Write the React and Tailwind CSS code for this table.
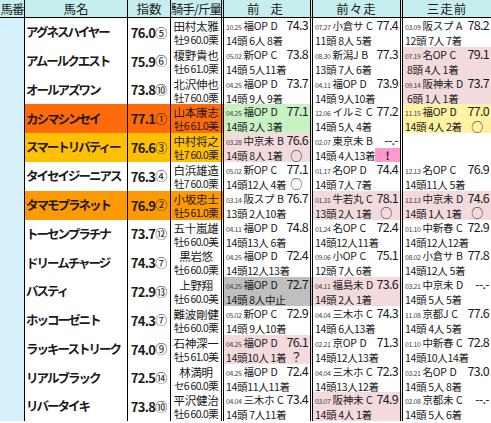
const BG = {
  pink: "bg-[#f3dadd]",
  green: "bg-[#c9f2c4]",
  gray: "bg-[#bfbfbf]",
  yellow: "bg-[#fff3a3]",
  none: "bg-white",
};

const HL = {
  red: "bg-[#ff6a0a]",
  gold: "bg-[#ffc000]",
  orange: "bg-[#ff9900]",
  none: "bg-white",
};

const rows = [
  { name: "アグネスハイヤー", idx: "76.0", no: "⑤", j: "田村太雅", info: "牡9 60.0栗",
    races: [
      { d: "10.25", c: "福OP D", v: "74.3", r: "14頭 6人 8着" },
      { d: "07.27", c: "小倉サ C", v: "77.4", r: "11頭 8人 5着" },
      { d: "03.09", c: "阪スプ A", v: "78.2", r: "12頭 7人 7着" },
    ] },
  { name: "アムールクエスト", idx: "75.9", no: "⑥", j: "榎野貴也", info: "牡6 61.0栗",
    races: [
      { d: "05.02", c: "新OP C", v: "73.8", r: "14頭 5人11着" },
      { d: "08.30", c: "新潟J B", v: "77.3", r: "13頭 7人 6着" },
      { d: "07.19", c: "名OP C", v: "79.1", r: " 8頭 4人 1着", bg: "pink" },
    ] },
  { name: "オールアズワン", idx: "73.8", no: "⑩", j: "北沢伸也", info: "牡7 60.0栗",
    races: [
      { d: "04.25", c: "福OP D", v: "73.7", r: "14頭 9人 9着" },
      { d: "04.11", c: "福OP D", v: "73.9", r: "14頭 9人10着" },
      { d: "09.14", c: "阪神未 D", v: "73.7", r: " 6頭 1人 1着", bg: "pink" },
    ] },
  { name: "カシマシンセイ", idx: "77.1", no: "①", j: "山本康志", info: "牡6 61.0美", hl: "red",
    races: [
      { d: "04.25", c: "福OP D", v: "77.1", r: "14頭 2人 3着", bg: "green" },
      { d: "12.06", c: "イルミ C", v: "77.2", r: "14頭 5人 4着" },
      { d: "11.15", c: "福OP D", v: "77.0", r: "14頭 4人 2着", bg: "yellow", m: "○" },
    ] },
  { name: "スマートリバティー", idx: "76.6", no: "③", j: "中村将之", info: "牡7 60.0栗", hl: "gold",
    races: [
      { d: "03.28", c: "中京未 B", v: "76.6", r: "14頭 8人 1着", bg: "pink", m: "○" },
      { d: "02.07", c: "東京未 B", v: "--.-", r: "14頭 4人13着", box: true },
      null,
    ] },
  { name: "タイセイジーニアス", idx: "76.3", no: "④", j: "白浜雄造", info: "牡7 60.0栗",
    races: [
      { d: "05.02", c: "新OP C", v: "77.1", r: "14頭12人 4着", m: "○" },
      { d: "01.17", c: "名OP D", v: "74.4", r: "14頭 7人 7着" },
      { d: "12.13", c: "名OP C", v: "76.9", r: "14頭11人 5着" },
    ] },
  { name: "タマモプラネット", idx: "76.9", no: "②", j: "小坂忠士", info: "牡5 61.0栗", hl: "orange",
    races: [
      { d: "03.14", c: "阪スプ B", v: "76.7", r: "13頭 2人10着" },
      { d: "01.31", c: "牛若丸 C", v: "78.1", r: "13頭 2人 1着", bg: "pink", m: "○" },
      { d: "12.13", c: "中京未 D", v: "74.6", r: "14頭 1人 1着", bg: "pink", m: "○" },
    ] },
  { name: "トーセンプラチナ", idx: "73.7", no: "⑫", j: "五十嵐雄", info: "牡6 60.0美",
    races: [
      { d: "04.11", c: "福OP D", v: "74.8", r: "14頭13人 6着" },
      { d: "01.24", c: "名OP C", v: "72.4", r: "14頭12人11着" },
      { d: "01.10", c: "中新春 C", v: "72.9", r: "14頭12人12着" },
    ] },
  { name: "ドリームチャージ", idx: "74.3", no: "⑦", j: "黒岩悠", info: "牡6 60.0栗",
    races: [
      { d: "04.25", c: "福OP D", v: "72.4", r: "14頭12人13着" },
      { d: "09.06", c: "小OP C", v: "75.1", r: "12頭 7人 6着" },
      { d: "08.02", c: "小倉サ B", v: "77.8", r: "14頭12人 5着" },
    ] },
  { name: "バスティ", idx: "72.9", no: "⑬", j: "上野翔", info: "牡6 60.0美",
    races: [
      { d: "04.25", c: "福OP D", v: "72.7", r: "14頭 8人中止", bg: "gray" },
      { d: "04.11", c: "福島未 D", v: "73.6", r: "14頭 2人 1着", bg: "pink" },
      { d: "03.21", c: "中京未 D", v: "--.-", r: "14頭 5人 5着" },
    ] },
  { name: "ホッコーゼニト", idx: "74.3", no: "⑦", j: "難波剛健", info: "牡6 60.0栗",
    races: [
      { d: "05.02", c: "新OP C", v: "72.9", r: "14頭 9人10着" },
      { d: "04.04", c: "三木ホ C", v: "74.3", r: "14頭 6人13着" },
      { d: "11.08", c: "京都J C", v: "77.6", r: "14頭 4人 5着" },
    ] },
  { name: "ラッキーストリーク", idx: "74.0", no: "⑨", j: "石神深一", info: "牡5 61.0美",
    races: [
      { d: "04.25", c: "福OP D", v: "76.1", r: "14頭10人 1着", bg: "pink", m: "？" },
      { d: "02.21", c: "京OP D", v: "71.3", r: "14頭12人13着" },
      { d: "01.10", c: "中新春 C", v: "72.8", r: "14頭10人14着" },
    ] },
  { name: "リアルブラック", idx: "72.5", no: "⑭", j: "林満明", info: "セ6 60.0栗",
    races: [
      { d: "04.25", c: "福OP D", v: "72.4", r: "14頭11人11着" },
      { d: "04.04", c: "三木ホ C", v: "72.3", r: "14頭13人12着" },
      { d: "03.21", c: "名OP D", v: "73.0", r: "14頭 5人 8着" },
    ] },
  { name: "リバータイキ", idx: "73.8", no: "⑩", j: "平沢健治", info: "牡6 60.0栗",
    races: [
      { d: "04.04", c: "三木ホ C", v: "73.4", r: "14頭 7人11着" },
      { d: "03.07", c: "阪神未 C", v: "74.9", r: "14頭 4人 1着", bg: "pink" },
      { d: "02.08", c: "京都未 C", v: "--.-", r: "14頭 5人 6着" },
    ] },
];

const cols = "grid grid-cols-[25px_103px_43px_53px_89px_90px_88px]";

function Race({ r, last }) {
  const edge = last ? "" : "border-r-[3px] border-double border-black";
  if (!r) return <div className={`bg-white ${edge}`} />;
  const [place, grade] = r.c.split(" ");
  return (
    <div className={`relative flex flex-col justify-center pl-[2px] pr-[2px] ${BG[r.bg || "none"]} ${edge}`}>
      <div className="flex items-baseline whitespace-pre leading-[14px]">
        <span className="text-[7px] tracking-[-0.4px] text-[#444]">{r.d}</span>
        <span className="ml-[2px] text-[10.5px] tracking-[-0.3px]">{place}</span>
        <span className="ml-[3px] text-[10.5px]">{grade}</span>
        <span className="ml-auto text-[12.5px] tracking-[-0.7px]">{r.v}</span>
      </div>
      <div className="flex items-center whitespace-pre text-[10.5px] leading-[13px] tracking-[-0.3px]">
        <span>{r.r}</span>
        {r.m && <span className="ml-auto mr-[6px] text-[12px] leading-[12px]">{r.m}</span>}
      </div>
      {r.box && (
        <div className="absolute bottom-0 right-0 flex h-[14px] w-[25px] items-center justify-center bg-[#ff99cc] text-[11px] font-bold leading-none text-[#222]">
          !
        </div>
      )}
    </div>
  );
}

export default function App() {
  return (
    <div className="h-[423px] w-[491px] overflow-hidden bg-white font-['Noto_Sans_CJK_JP',sans-serif] text-[#1a1a1a]">
      <div className={`${cols} h-[18px] border-b border-black bg-[#c7eeee] text-[12.5px] leading-[17px]`}>
        <div className="border-r border-black text-center tracking-[-1px]">馬番</div>
        <div className="border-r border-black text-center">馬名</div>
        <div className="border-r border-black text-center">指数</div>
        <div className="border-r-[3px] border-double border-black text-center tracking-[-1px] whitespace-nowrap">騎手/斤量</div>
        <div className="border-r-[3px] border-double border-black text-center tracking-[4px]">前 走</div>
        <div className="border-r-[3px] border-double border-black text-center tracking-[1px]">前々走</div>
        <div className="text-center tracking-[1px]">三走前</div>
      </div>
      {rows.map((row, i) => {
        const hl = HL[row.hl || "none"];
        return (
          <div key={i} className={`${cols} h-[28.8px] border-b border-black`}>
            <div className="border-r border-black bg-[#d6f1fa]" />
            <div className={`flex items-center border-r border-black pl-[1px] text-[12.5px] font-bold tracking-[-2px] whitespace-nowrap overflow-hidden ${hl}`}>
              {row.name}
            </div>
            <div className={`flex items-center justify-center border-r border-black whitespace-nowrap ${hl}`}>
              <span className="text-[13px] font-bold tracking-[-0.7px]">{row.idx}</span>
              <span className="text-[12px]">{row.no}</span>
            </div>
            <div className={`flex flex-col items-center justify-center overflow-hidden border-r-[3px] border-double border-black whitespace-nowrap ${hl}`}>
              <span className="text-[11.5px] leading-[14px] tracking-[-0.3px]">{row.j}</span>
              <span className="text-[10.5px] leading-[13px] tracking-[-0.7px]">{row.info}</span>
            </div>
            {row.races.map((r, k) => (
              <Race key={k} r={r} last={k === 2} />
            ))}
          </div>
        );
      })}
    </div>
  );
}
